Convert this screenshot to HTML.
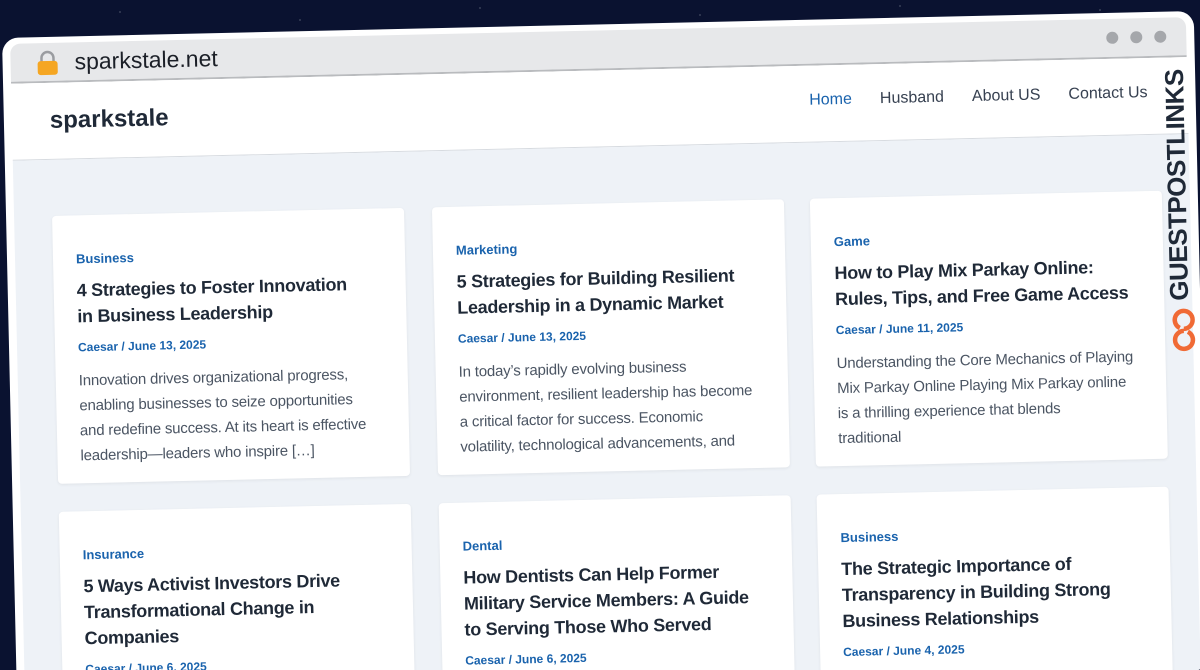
<!DOCTYPE html>
<html><head><meta charset="utf-8"><style>
html,body{margin:0;padding:0;width:1200px;height:670px;overflow:hidden;background:#0b1330;font-family:"Liberation Sans",sans-serif}
.stars{position:absolute;left:0;top:0;width:1200px;height:670px;background:
radial-gradient(1px 1px at 120px 12px,#fff8,transparent),radial-gradient(1px 1px at 300px 20px,#fff8,transparent),
radial-gradient(1px 1px at 480px 8px,#fff8,transparent),radial-gradient(1px 1px at 700px 15px,#fff8,transparent),
radial-gradient(1px 1px at 900px 6px,#fff8,transparent),radial-gradient(1px 1px at 1100px 10px,#fff8,transparent),
#0a1230;overflow:hidden}
.win{position:absolute;left:2px;top:38px;width:1192px;height:660px;background:#fff;border-radius:16px;transform-origin:0 0;transform:rotate(-1.3deg);overflow:hidden}
.bar{position:absolute;left:8px;top:6px;right:8px;height:38px;background:#e7e8ea;border-bottom:2px solid #b9bbbe;border-radius:10px 10px 0 0}
.url{position:absolute;left:64px;top:6px;font-size:23px;color:#1b1f27}
.lock{position:absolute;left:26px;top:7px;width:22px;height:26px}
.dots{position:absolute;right:20px;top:12px}
.dots span{display:inline-block;width:12px;height:12px;border-radius:50%;background:#a5a7ab;margin-left:12px}
.head{position:absolute;left:8px;right:8px;top:46px;height:76px;background:#fff;border-bottom:1px solid #d7dbe0}
.logo{position:absolute;left:38px;top:24px;font-size:24px;font-weight:bold;color:#1f2937}
.nav{position:absolute;right:40px;top:26px;font-size:16px;color:#374151}
.nav span{margin-left:28px}
.body{position:absolute;left:8px;right:8px;top:123px;bottom:0;background:#eef2f7}
.card{position:absolute;width:352px;height:268px;background:#fff;border-radius:4px;box-shadow:0 1px 3px #0001}
.card .c{position:absolute;left:23px;top:36px;right:10px;white-space:nowrap}
.cat{font-size:13px;font-weight:bold;color:#1a63ad}
.t{font-size:18px;font-weight:bold;color:#1f2937;line-height:26px;margin-top:11px;letter-spacing:-0.3px}
.m{font-size:12px;font-weight:bold;color:#1a63ad;margin-top:11px}
.e{font-size:15px;color:#4b5563;line-height:25px;margin-top:14px;letter-spacing:-0.2px}
.gpl{position:absolute;left:1160px;top:55px;width:34px;height:300px;transform:rotate(-1.3deg)}
.gpl .tx{position:absolute;left:-108px;top:115px;width:250px;height:30px;transform:rotate(-90deg);font-size:26px;font-weight:bold;color:#1f2937;text-align:center;white-space:nowrap;letter-spacing:-0.5px}
</style></head><body>
<div class="stars">
<div class="win">
 <div class="bar">
  <svg class="lock" viewBox="0 0 22 26"><path d="M5 12V8a6 6 0 0 1 12 0v4" fill="none" stroke="#9a9ca0" stroke-width="2.5"/><rect x="1" y="11" width="20" height="14" rx="3" fill="#f5a623"/></svg>
  <div class="url">sparkstale.net</div>
  <div class="dots"><span></span><span></span><span></span></div>
 </div>
 <div class="head"><div class="logo">sparkstale</div>
  <div class="nav"><span style="color:#1a63ad">Home</span><span>Husband</span><span>About US</span><span>Contact Us</span></div></div>
 <div class="body">
  <div class="card" style="left:38px;top:56px"><div class="c"><div class="cat">Business</div><div class="t">4 Strategies to Foster Innovation<br>in Business Leadership</div><div class="m">Caesar / June 13, 2025</div><div class="e">Innovation drives organizational progress,<br>enabling businesses to seize opportunities<br>and redefine success. At its heart is effective<br>leadership—leaders who inspire […]</div></div></div>
  <div class="card" style="left:418px;top:56px"><div class="c"><div class="cat">Marketing</div><div class="t">5 Strategies for Building Resilient<br>Leadership in a Dynamic Market</div><div class="m">Caesar / June 13, 2025</div><div class="e">In today’s rapidly evolving business<br>environment, resilient leadership has become<br>a critical factor for success. Economic<br>volatility, technological advancements, and</div></div></div>
  <div class="card" style="left:796px;top:56px"><div class="c"><div class="cat">Game</div><div class="t">How to Play Mix Parkay Online:<br>Rules, Tips, and Free Game Access</div><div class="m">Caesar / June 11, 2025</div><div class="e">Understanding the Core Mechanics of Playing<br>Mix Parkay Online Playing Mix Parkay online<br>is a thrilling experience that blends<br>traditional</div></div></div>
  <div class="card" style="left:38px;top:352px"><div class="c"><div class="cat">Insurance</div><div class="t">5 Ways Activist Investors Drive<br>Transformational Change in<br>Companies</div><div class="m">Caesar / June 6, 2025</div></div></div>
  <div class="card" style="left:418px;top:352px"><div class="c"><div class="cat">Dental</div><div class="t">How Dentists Can Help Former<br>Military Service Members: A Guide<br>to Serving Those Who Served</div><div class="m">Caesar / June 6, 2025</div></div></div>
  <div class="card" style="left:796px;top:352px"><div class="c"><div class="cat">Business</div><div class="t">The Strategic Importance of<br>Transparency in Building Strong<br>Business Relationships</div><div class="m">Caesar / June 4, 2025</div></div></div>
 </div>
</div>
<div class="gpl"><div class="tx">GUESTPOSTLINKS</div>
 <svg style="position:absolute;left:8px;top:252px" width="26" height="46" viewBox="0 0 26 46"><path d="M13 4a9 9 0 0 1 0 18M13 24a9 9 0 0 0 0 18M13 4a9 9 0 0 0-4 17M13 42a9 9 0 0 0 4-17" fill="none" stroke="#f06a35" stroke-width="4.5"/></svg>
</div>
</div>
</body></html>
